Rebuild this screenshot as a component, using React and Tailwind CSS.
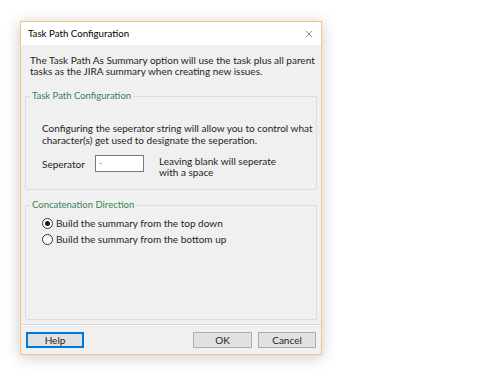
import { X } from 'lucide-react';

function GroupBox({ title, className, children }) {
  return (
    <fieldset className={`mx-[4px] min-w-0 border border-[#dcdcdc] rounded-[2px] px-[16px] ${className}`}>
      <legend className="-ml-[12px] px-[2px] text-[#3b7f55] text-[9.5px] leading-[12px]">{title}</legend>
      {children}
    </fieldset>
  );
}

function Radio({ checked, label }) {
  return (
    <label className="flex items-center gap-[3px] h-[16px]">
      <span className="w-[11px] h-[11px] rounded-full border border-[#333] bg-white flex items-center justify-center">
        {checked && <span className="w-[5px] h-[5px] rounded-full bg-[#1a1a1a]"></span>}
      </span>
      <span>{label}</span>
    </label>
  );
}

export default function App() {
  return (
    <div className="w-[488px] h-[381px] bg-white pl-[20px] pt-[21px] text-[#1e1e1e] text-[10px] leading-[11px] whitespace-nowrap" style={{ fontFamily: '"Segoe UI", Lato, sans-serif' }}>
      {/* Dialog window */}
      <div className="w-[302px] h-[334px] border border-[#f3c77f] bg-[#f0f0f0] flex flex-col shadow-[0_2px_14px_rgba(0,0,0,0.22)]">
        {/* Title bar */}
        <div className="h-[23px] bg-white flex items-center justify-between pl-[7px] pr-[6px] shrink-0">
          <span className="text-[9.7px] text-black">Task Path Configuration</span>
          <X className="w-[12px] h-[12px] text-[#333]" strokeWidth={1.1} />
        </div>

        {/* Body */}
        <div className="flex-1 flex flex-col">
          <p className="px-[9px] pt-[10px] text-[#1e1e1e]">
            The Task Path As Summary option will use the task plus all parent<br />
            tasks as the JIRA summary when creating new issues.
          </p>

          <GroupBox title="Task Path Configuration" className="mt-[13px] h-[100px] pt-[20px]">
            <p className="leading-[12px]">
              Configuring the seperator string will allow you to control what<br />
              character(s) get used to designate the seperation.
            </p>
            <div className="flex items-start mt-[9px]">
              <span className="w-[53px] pt-[4px]">Seperator</span>
              <div className="w-[49px] h-[17px] bg-white border border-[#7a7a7a] pl-[3px] text-[8px] leading-[15px] text-[#555]">-</div>
              <span className="ml-[15px] pt-[1px]">
                Leaving blank will seperate<br />
                with a space
              </span>
            </div>
          </GroupBox>

          <GroupBox title="Concatenation Direction" className="mt-[9px] h-[121px] pt-[4px]">
            <div className="flex flex-col">
              <Radio checked label="Build the summary from the top down" />
              <Radio label="Build the summary from the bottom up" />
            </div>
          </GroupBox>

          {/* Divider */}
          <div className="mt-[4px] h-[2px] bg-[#dadada] border-b border-white"></div>

          {/* Buttons */}
          <div className="flex items-center justify-between px-[5px] mt-[6px]">
            <button className="w-[58px] h-[16px] bg-[#e1e1e1] border-[2px] border-[#0078d7] text-[#1e1e1e] text-[10px] leading-none">Help</button>
            <div className="flex gap-[6px]">
              <button className="w-[59px] h-[16px] bg-[#e1e1e1] border border-[#adadad] text-[#1e1e1e] text-[10px] leading-none">OK</button>
              <button className="w-[58px] h-[16px] bg-[#e1e1e1] border border-[#adadad] text-[#1e1e1e] text-[10px] leading-none">Cancel</button>
            </div>
          </div>
        </div>
      </div>
    </div>
  );
}
